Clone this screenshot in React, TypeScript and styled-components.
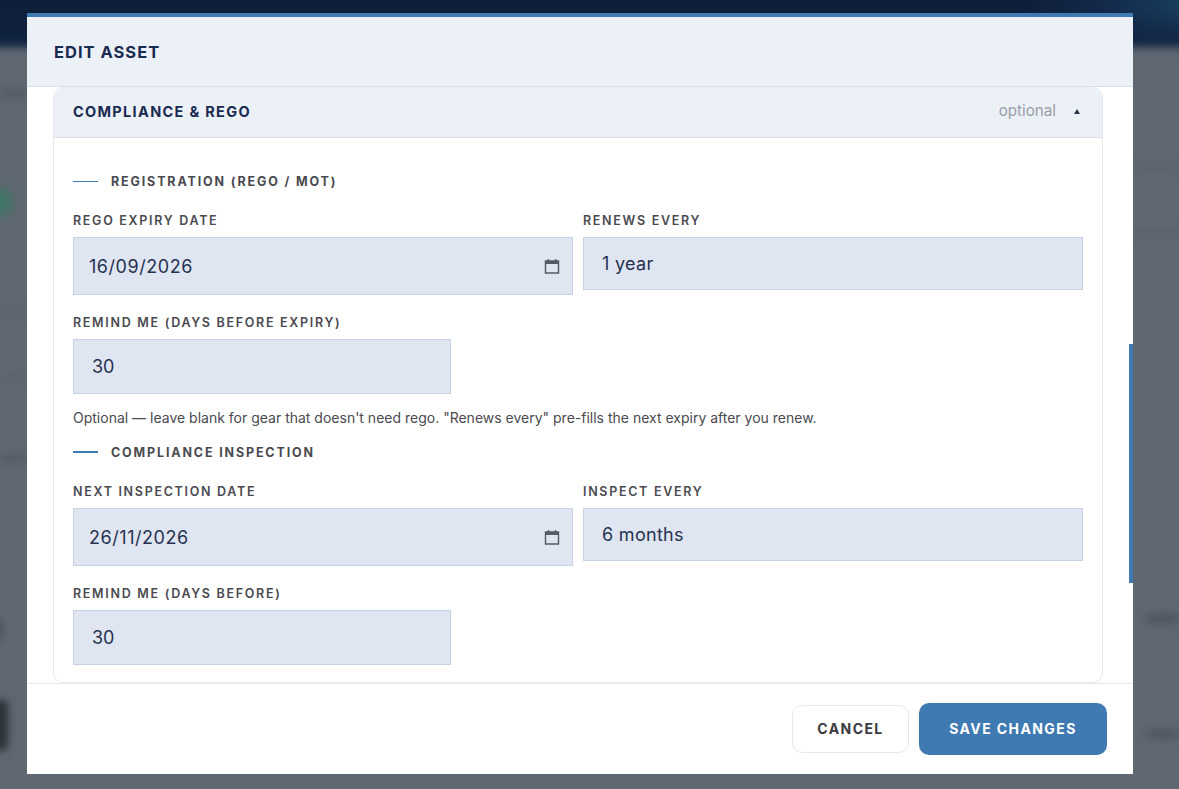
import styled, { createGlobalStyle } from "styled-components";

const GlobalStyle = createGlobalStyle`
  * {
    box-sizing: border-box;
  }
  html,
  body {
    margin: 0;
    height: 100%;
    overflow: hidden;
    background: #5f6871;
    font-family: Inter, "Liberation Sans", sans-serif;
  }
`;

const Page = styled.div`
  position: relative;
  width: 1179px;
  height: 789px;
  overflow: hidden;
  background: #5f6871;
`;

// blurred app behind the modal
const Backdrop = styled.div`
  position: absolute;
  inset: 0;
  filter: blur(4px);
`;

const TopBar = styled.div`
  height: 67px;
  margin: -20px -20px 0;
  background:
    linear-gradient(180deg, rgba(14, 31, 58, 0) 40%, #10233f 100%),
    linear-gradient(90deg, #0e1f3a 0%, #0e1f3a 86%, #13294a 92%, #1a4262 100%);
`;

const Blob = styled.div<{ $x: number; $y: number; $w: number; $h: number; $c: string; $round?: boolean }>`
  position: absolute;
  left: ${(p) => p.$x}px;
  top: ${(p) => p.$y}px;
  width: ${(p) => p.$w}px;
  height: ${(p) => p.$h}px;
  background: ${(p) => p.$c};
  border-radius: ${(p) => (p.$round ? "50%" : "4px")};
`;

const Modal = styled.div`
  position: absolute;
  left: 27px;
  top: 13px;
  width: 1106px;
  height: 761px;
  display: flex;
  flex-direction: column;
  background: #fff;
  border-top: 4px solid #3f7ab2;
`;

const ModalHeader = styled.div`
  height: 70px;
  flex: none;
  display: flex;
  align-items: center;
  padding: 0 27px;
  background: #ecf0f7;
  border-bottom: 1px solid #dcdfe8;
`;

const ModalTitle = styled.h2`
  margin: 0;
  font-size: 16.5px;
  font-weight: 700;
  letter-spacing: 1px;
  color: #1a2b50;
`;

const ModalBody = styled.div`
  flex: 1;
  min-height: 0;
  padding: 0 30px 0 26px;
  position: relative;
`;

const Scrollbar = styled.div`
  position: absolute;
  right: 0;
  top: 257px;
  width: 4px;
  height: 239px;
  background: #3f7ab2;
`;

const Card = styled.section`
  height: 100%;
  border: 1px solid #e6e8ee;
  border-top: none;
  border-radius: 10px;
  overflow: hidden;
`;

const CardHeader = styled.div`
  height: 51px;
  display: flex;
  align-items: center;
  padding: 0 22px 1px 19px;
  background: #ecf0f7;
  border-bottom: 1px solid #dcdfe8;
`;

const CardTitle = styled.h3`
  margin: 0;
  flex: 1;
  font-size: 14.5px;
  font-weight: 700;
  letter-spacing: 1.32px;
  color: #1a2b50;
`;

const Optional = styled.span`
  font-size: 15.2px;
  color: #9a9ea8;
  margin: 0 18px 2px 0;
`;

const Caret = styled.span`
  width: 0;
  height: 0;
  border-left: 3.5px solid transparent;
  border-right: 3.5px solid transparent;
  border-bottom: 5px solid #2c3648;
`;

const CardContent = styled.div`
  padding: 34px 19px 0;
  display: flex;
  flex-direction: column;
`;

const SubHeading = styled.div<{ $thick?: boolean }>`
  display: flex;
  align-items: center;
  gap: 13px;
  height: 18px;
  font-size: 12.5px;
  font-weight: 700;
  letter-spacing: 1.85px;
  color: #4a4a4f;

  &::before {
    content: "";
    width: 25px;
    height: ${(p) => (p.$thick ? 2 : 1)}px;
    background: #3f7ab2;
  }
`;

const Row = styled.div`
  display: grid;
  grid-template-columns: 500px 500px;
  gap: 10px;
  align-items: start;
  margin-top: 22px;
`;

const Field = styled.div<{ $narrow?: boolean; $gap?: number }>`
  display: flex;
  flex-direction: column;
  width: ${(p) => (p.$narrow ? "378px" : "auto")};
  margin-top: ${(p) => p.$gap ?? 0}px;
`;

const Label = styled.label`
  height: 17px;
  line-height: 17px;
  margin-bottom: 8px;
  font-size: 12.5px;
  font-weight: 600;
  letter-spacing: 1.7px;
  color: #4a4a4f;
`;

const Input = styled.div<{ $h: number; $pad?: number; $track?: number }>`
  height: ${(p) => p.$h}px;
  display: flex;
  align-items: center;
  justify-content: space-between;
  padding: 0 12px 0 ${(p) => p.$pad ?? 18}px;
  background: #dfe5f1;
  border: 1px solid #c9d2e2;
  font-size: 18px;
  letter-spacing: ${(p) => p.$track ?? 0}px;
  color: #26324f;
`;

const Hint = styled.p`
  margin: 15px 0 16px;
  height: 18px;
  line-height: 18px;
  font-size: 14px;
  color: #4a4a4f;
`;

const Footer = styled.div`
  height: 91px;
  flex: none;
  display: flex;
  justify-content: flex-end;
  align-items: center;
  gap: 10px;
  padding: 0 26px 0 0;
  border-top: 1px solid #e6e8ee;
`;

const Button = styled.button<{ $primary?: boolean }>`
  height: ${(p) => (p.$primary ? 52 : 48)}px;
  width: ${(p) => (p.$primary ? 188 : 117)}px;
  padding: 0 0 1px;
  border-radius: 10px;
  border: ${(p) => (p.$primary ? "none" : "1px solid #e6e8ee")};
  background: ${(p) => (p.$primary ? "#3f7ab2" : "#fff")};
  color: ${(p) => (p.$primary ? "#fff" : "#3a3a40")};
  font-family: inherit;
  font-size: 14px;
  font-weight: 700;
  letter-spacing: 1.4px;
`;

const CalendarIcon = () => (
  <svg width="16" height="16" viewBox="0 0 16 16" fill="none">
    <path d="M1.5 3h13v12h-13z" stroke="#555b66" strokeWidth="1.4" />
    <path d="M1.5 3h13v3h-13z" fill="#555b66" />
    <path d="M4.5 1v2M11.5 1v2" stroke="#555b66" strokeWidth="1.4" />
  </svg>
);

export default function App() {
  return (
    <Page>
      <GlobalStyle />
      <Backdrop>
        <TopBar />
        <Blob $x={-12} $y={188} $w={24} $h={28} $c="#3f7466" $round />
        <Blob $x={-8} $y={700} $w={16} $h={50} $c="#2b3036" />
        <Blob $x={-6} $y={618} $w={8} $h={22} $c="#4a515a" />
        <Blob $x={0} $y={90} $w={27} $h={7} $c="#505860" />
        <Blob $x={0} $y={310} $w={27} $h={3} $c="#565e67" />
        <Blob $x={0} $y={378} $w={27} $h={3} $c="#565e67" />
        <Blob $x={0} $y={455} $w={27} $h={7} $c="#515962" />
        <Blob $x={1133} $y={164} $w={46} $h={3} $c="#565e67" />
        <Blob $x={1133} $y={233} $w={46} $h={3} $c="#565e67" />
        <Blob $x={1146} $y={614} $w={33} $h={9} $c="#4b525b" />
        <Blob $x={1146} $y={730} $w={33} $h={8} $c="#4b525b" />
      </Backdrop>
      <Modal>
        <ModalHeader>
          <ModalTitle>EDIT ASSET</ModalTitle>
        </ModalHeader>
        <ModalBody>
          <Card>
            <CardHeader>
              <CardTitle>COMPLIANCE &amp; REGO</CardTitle>
              <Optional>optional</Optional>
              <Caret />
            </CardHeader>
            <CardContent>
              <SubHeading>REGISTRATION (REGO / MOT)</SubHeading>
              <Row>
                <Field>
                  <Label>REGO EXPIRY DATE</Label>
                  <Input $h={58} $pad={15} $track={0.55}>
                    16/09/2026
                    <CalendarIcon />
                  </Input>
                </Field>
                <Field>
                  <Label>RENEWS EVERY</Label>
                  <Input $h={53} $track={0.3}>1 year</Input>
                </Field>
              </Row>
              <Field $narrow $gap={19}>
                <Label>REMIND ME (DAYS BEFORE EXPIRY)</Label>
                <Input $h={55}>30</Input>
              </Field>
              <Hint>
                Optional — leave blank for gear that doesn't need rego. "Renews every" pre-fills the next expiry
                after you renew.
              </Hint>
              <SubHeading $thick>COMPLIANCE INSPECTION</SubHeading>
              <Row>
                <Field>
                  <Label>NEXT INSPECTION DATE</Label>
                  <Input $h={58} $pad={15} $track={0.55}>
                    26/11/2026
                    <CalendarIcon />
                  </Input>
                </Field>
                <Field>
                  <Label>INSPECT EVERY</Label>
                  <Input $h={53} $track={0.3}>6 months</Input>
                </Field>
              </Row>
              <Field $narrow $gap={19}>
                <Label>REMIND ME (DAYS BEFORE)</Label>
                <Input $h={55}>30</Input>
              </Field>
            </CardContent>
          </Card>
          <Scrollbar />
        </ModalBody>
        <Footer>
          <Button>CANCEL</Button>
          <Button $primary>SAVE CHANGES</Button>
        </Footer>
      </Modal>
    </Page>
  );
}
